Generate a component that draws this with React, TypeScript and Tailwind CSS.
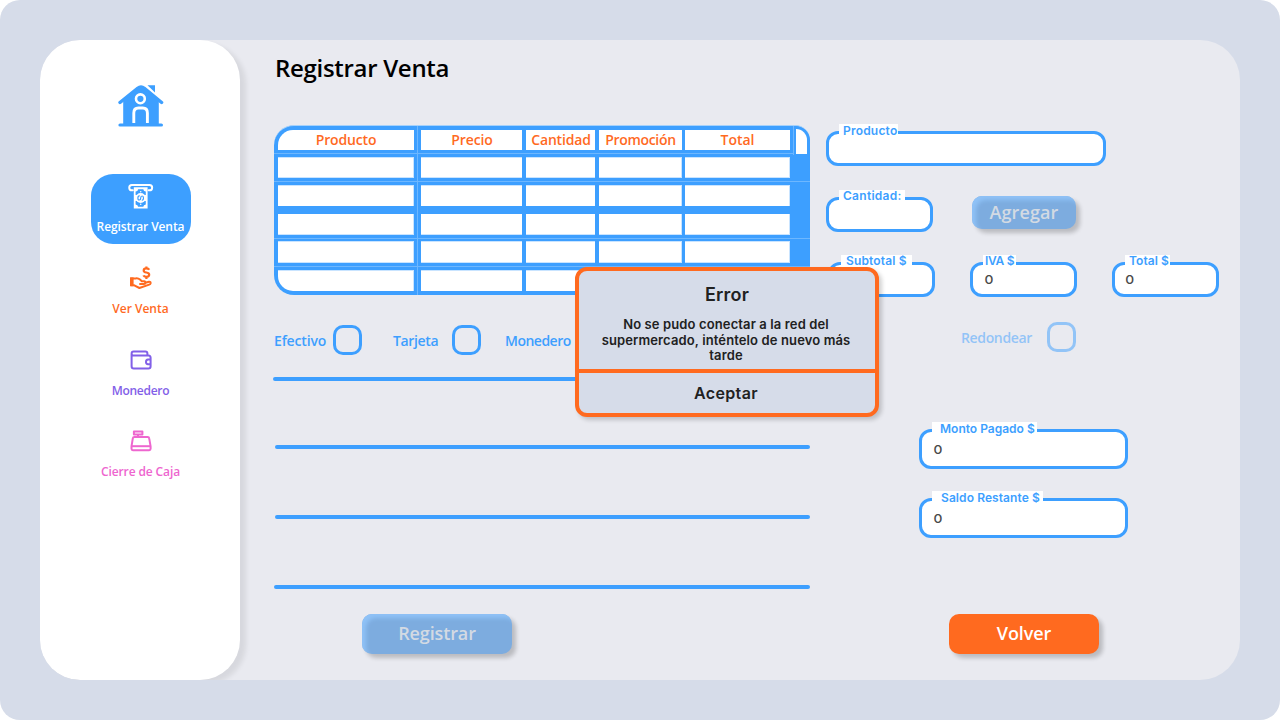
import type { ReactNode } from "react";

function HomeIcon() {
  return (
    <svg width="46" height="43" viewBox="0 0 46 43" fill="none" className="block">
      <path d="M29.5 0.2H37V7.6Z" fill="#3d9fff" />
      <path
        d="M2 17.5 19.6 3.3Q23 0.8 26.4 3.3L43.6 17.5"
        stroke="#3d9fff"
        strokeWidth="3.4"
        strokeLinecap="round"
      />
      <path d="M5.2 15.5 19.6 4Q23 2 26.4 4L40.8 15.5V40H5.2Z" fill="#3d9fff" />
      <path d="M2 40H43.4" stroke="#3d9fff" strokeWidth="3.2" strokeLinecap="round" />
      <circle cx="22.4" cy="13.8" r="4.4" stroke="#fff" strokeWidth="2.6" />
      <path
        d="M15.8 38V28Q15.8 23 20.4 23H24.8Q29.4 23 29.4 28V38"
        stroke="#fff"
        strokeWidth="2.9"
        strokeLinecap="butt"
      />
    </svg>
  );
}

function CashIcon() {
  return (
    <svg width="28" height="28" viewBox="0 0 28 28" fill="none" className="block">
      <path
        d="M5.8 8.3H4.9A2.6 2.6 0 0 1 4.9 3H22.5A2.6 2.6 0 0 1 22.5 8.3H21.6"
        stroke="#fff"
        strokeWidth="2"
        strokeLinecap="round"
      />
      <path d="M6.8 5.2H20.6V26.6H6.8Z" fill="#fff" />
      <path
        d="M11.1 7.3H16.3Q16.5 9.4 18.8 9.6V13H8.6V9.6Q10.9 9.4 11.1 7.3ZM8.6 19H18.8V22.4Q16.5 22.6 16.3 24.7H11.1Q10.9 22.6 8.6 22.4Z"
        fill="#3d9fff"
      />
      <circle cx="13.7" cy="16" r="5" fill="#fff" />
      <path
        d="M12.3 13.8Q10.9 13.8 10.9 16T12.3 18Q13.7 18 13.7 16T15.1 14Q16.5 14 16.5 16T15.3 18.2"
        stroke="#3d9fff"
        strokeWidth="1.2"
        strokeLinecap="round"
      />
      <circle cx="13.7" cy="9.7" r="0.8" fill="#fff" />
      <circle cx="13.7" cy="22.3" r="0.8" fill="#fff" />
    </svg>
  );
}

function HandMoneyIcon() {
  return (
    <svg width="28" height="28" viewBox="0 0 28 28" fill="none" className="block">
      <path
        d="M22.2 5.8Q21.6 4.4 19.3 4.4Q16.7 4.4 16.7 6.4Q16.7 8.1 19.4 8.5Q22.2 8.9 22.2 10.8Q22.2 12.8 19.4 12.8Q17 12.8 16.4 11.4M19.4 2.4V4.4M19.4 12.8V15"
        stroke="#ff6a1f"
        strokeWidth="2.2"
      />
      <path
        d="M4 14.4H8.6Q11.2 14 13 15.6L14.8 17.2H17.4Q18.6 17.4 18.4 18.8L22 17.8Q23.8 17.6 23.6 19.2Q23.4 20.2 22.2 20.6L12.4 24L6.8 21.2H4Z"
        stroke="#ff6a1f"
        strokeWidth="2"
        strokeLinejoin="round"
      />
      <path d="M3 13.4H6.6V22.2H3Z" fill="#ff6a1f" />
      <path d="M13 20H17Q18.4 20 18.4 18.4" stroke="#ff6a1f" strokeWidth="1.9" strokeLinecap="round" />
    </svg>
  );
}

function WalletIcon() {
  return (
    <svg width="28" height="28" viewBox="0 0 28 28" fill="none" stroke="#8260e8" strokeWidth="2" className="block">
      <path d="M4.6 8V20.2Q4.6 22.4 6.8 22.4H21.4Q23.6 22.4 23.6 20.2V11.8Q23.6 9.8 21.4 9.6H6Q4.6 9.4 4.6 7.6Q4.6 5.4 6.6 5.4H18.4Q20.4 5.4 20.4 7.4V9.4" />
      <path d="M23.6 13.6H21Q19 13.8 19 15.9T21 18.2H23.6" />
    </svg>
  );
}

function RegisterIcon() {
  return (
    <svg width="28" height="28" viewBox="0 0 28 28" fill="none" stroke="#ee66cf" strokeWidth="2" strokeLinejoin="round" className="block">
      <path d="M6.9 4.5H15.4V7.5H6.9ZM11 7.8V10" />
      <path d="M7.4 10H20.6Q22 10 22.2 11.4L23.6 19.4V21.8Q23.6 23.2 22.2 23.2H5.9Q4.5 23.2 4.5 21.8V19.4L5.8 11.4Q6 10 7.4 10Z" />
      <path d="M4.6 19.2H23.4" />
    </svg>
  );
}

function NavItem({ icon, label, className }: { icon: ReactNode; label: string; className: string }) {
  return (
    <a className={`flex h-[70px] w-[100px] flex-col items-center rounded-[22px] pt-2 text-[12px] font-semibold whitespace-nowrap ${className}`}>
      {icon}
      <span className="mt-2 leading-[17px]">{label}</span>
    </a>
  );
}

type FieldProps = { label: string; value?: string; box: string; tag: string; pad?: string };

function Field({ label, value, box, tag, pad = "" }: FieldProps) {
  return (
    <div className={`relative flex shrink-0 rounded-[12px] border-[3px] border-[#3d9fff] bg-white ${box}`}>
      <label
        className={`absolute -top-[10px] h-[14px] bg-white text-[12px] font-semibold whitespace-nowrap text-[#3d9fff] ${tag}`}
      >
        {label}
      </label>
      <span className={`origin-left scale-x-[1.15] text-[12px] leading-4 font-medium text-[#4a4a4a] ${pad}`}>{value}</span>
    </div>
  );
}

const disabledButton =
  "bg-[#7dacdf] text-[#d3dae3] shadow-[4px_4px_4px_rgba(0,0,0,0.2),inset_4px_4px_4px_#8fc2f7]";

const columns = "grid grid-cols-[136px_7px_101px_4px_69px_4px_83px_3px_105px] pl-1";

const header = [
  { name: "Producto", style: "rounded-tl-[15px] tracking-[-0.15px]" },
  { name: "Precio", style: "pl-px tracking-[-0.1px]" },
  { name: "Cantidad", style: "pl-px tracking-[-0.18px]" },
  { name: "Promoción", style: "tracking-[-0.33px]" },
  { name: "Total", style: "" },
];

const bodyRows = [
  { height: "h-[21px] border-y", gap: "h-[7px]", line: true },
  { height: "h-[21px] border-t", gap: "h-2", line: false },
  { height: "h-[21px] border-b", gap: "h-[6px]", line: true },
  { height: "h-[22px] border-y", gap: "h-[7px]", line: true },
  { height: "h-[21px] border-t", gap: "h-1", line: false },
];

function Rule({ height, line }: { height: string; line: boolean }) {
  return <div className={`flex items-center ${height}`}>{line && <div className="h-px w-full bg-[#6db7ff]" />}</div>;
}

function ColumnRule() {
  return (
    <div className="flex justify-center">
      <div className="-my-1 w-px bg-[#6db7ff]" />
    </div>
  );
}

function SalesTable() {
  return (
    <div className="relative flex h-[170px] w-[536px] flex-col overflow-hidden rounded-l-[20px] rounded-tr-[15px] border-t border-[#a5d1fb] bg-[#3d9fff] pt-1">
      <div className={`${columns} h-5 text-center text-[14px] leading-[19px] font-semibold text-[#ff6a1f]`}>
        {header.map((h, i) => [
          <div key={h.name} className={`bg-white whitespace-nowrap ${h.style}`}>{h.name}</div>,
          i === 0 ? <ColumnRule key="r0" /> : i < 4 ? <div key={`r${i}`} /> : null,
        ])}
      </div>
      <Rule height="h-[7px]" line />
      {bodyRows.map((row, r) => (
        <div key={r}>
          <div className={columns}>
            {[0, 1, 2, 3, 4].map((c) => [
              <div
                key={c}
                className={`border-[#c9e4ff] bg-white ${row.height} ${c === 0 || c > 2 ? "border-r" : ""} ${
                  r === 4 && c === 0 ? "rounded-bl-[15px]" : ""
                }`}
              />,
              c === 0 ? <ColumnRule key="r0" /> : c < 4 ? <div key={`r${c}`} /> : null,
            ])}
          </div>
          <Rule height={row.gap} line={row.line} />
        </div>
      ))}
      <div className="absolute top-0 right-0 flex h-[29px] w-[17px] rounded-tr-[15px] border-l border-[#6db7ff] bg-[#3d9fff] pt-[3px] pr-[3px] pl-[2px]">
        <div className="h-[25px] w-full rounded-tr-[11px] bg-white" />
      </div>
    </div>
  );
}

function Check() {
  return <div className="h-[30px] w-[29px] rounded-[10px] border-[3px] border-[#3d9fff]" />;
}

export default function App() {
  return (
    <div className="h-[720px] w-[1280px] bg-white font-['Open_Sans',sans-serif]">
      <div className="relative h-full w-full rounded-[20px] bg-[#d6dce9] p-10">
        <main className="flex h-[640px] w-[1200px] overflow-hidden rounded-[40px] bg-[#e9eaf0]">
          <aside className="flex h-full w-[200px] shrink-0 flex-col items-center rounded-[40px] bg-white pt-[45px] pl-px shadow-[6px_4px_5px_rgba(0,0,0,0.08)]">
            <HomeIcon />
            <nav className="mt-[46px] flex flex-col gap-3">
              <NavItem icon={<CashIcon />} label="Registrar Venta" className="bg-[#3d9fff] tracking-[-0.1px] text-white" />
              <NavItem icon={<HandMoneyIcon />} label="Ver Venta" className="text-[#ff6a1f]" />
              <NavItem icon={<WalletIcon />} label="Monedero" className="tracking-[-0.28px] text-[#8260e8]" />
              <NavItem icon={<RegisterIcon />} label="Cierre de Caja" className="-mt-px tracking-[-0.12px] text-[#ee66cf]" />
            </nav>
          </aside>

          <section className="flex w-[586px] shrink-0 flex-col pl-[34px]">
            <h1 className="mt-3 h-8 pl-px text-[24px] leading-8 font-semibold tracking-[-0.3px] text-black">Registrar Venta</h1>
            <div className="mt-[41px]">
              <SalesTable />
            </div>
            <div className="mt-[30px] flex h-[30px] items-center text-[14px] leading-5 font-semibold text-[#3d9fff]">
              <span className="mt-[2px] w-[59px] tracking-[-0.15px]">Efectivo</span>
              <Check />
              <span className="mt-[2px] ml-[31px] w-[59px] tracking-[-0.35px]">Tarjeta</span>
              <Check />
              <span className="mt-[2px] ml-6 tracking-[-0.5px]">Monedero</span>
            </div>
            <div className="mt-[22px] -ml-px h-1 w-[537px] rounded-full bg-[#3d9fff]" />
            <div className="mt-16 ml-px h-1 w-[535px] rounded-full bg-[#3d9fff]" />
            <div className="mt-[66px] ml-px h-1 w-[535px] rounded-full bg-[#3d9fff]" />
            <div className="mt-[66px] h-1 w-[536px] rounded-full bg-[#3d9fff]" />
            <button
              className={`mt-[25px] ml-[88px] h-10 w-[150px] rounded-[10px] pb-[2px] text-[18px] leading-[24px] font-semibold tracking-[-0.12px] ${disabledButton}`}
            >
              Registrar
            </button>
          </section>

          <section className="flex w-[414px] shrink-0 flex-col pt-[91px] font-[Inter,sans-serif]">
            <Field label="Producto" box="h-[35px] w-[280px]" tag="left-[10px] w-[59px] pl-1 leading-[13px] tracking-[0.2px]" />
            <div className="mt-[30px] flex h-9">
              <Field label="Cantidad:" box="mt-px h-[35px] w-[107px]" tag="left-[10px] w-[66px] pl-[4px] leading-[12px] tracking-[0.28px]" />
              <button
                className={`ml-[39px] h-[33px] w-[104px] rounded-[10px] pb-px font-['Open_Sans',sans-serif] text-[18px] leading-[24px] font-semibold tracking-[0.1px] ${disabledButton}`}
              >
                Agregar
              </button>
            </div>
            <div className="mt-[30px] flex">
              <Field label="Subtotal $" value="0" box="ml-[2px] h-[35px] w-[107px]" tag="left-[10px] w-[71px] pl-[5px] leading-[12px] tracking-[0.15px]" pad="pt-[6px] pl-3" />
              <Field label="IVA $" value="0" box="ml-[35px] h-[35px] w-[107px]" tag="left-[10px] w-[33px] pl-[2px] leading-[12px] tracking-[-0.3px]" pad="pt-[7px] pl-[10px]" />
              <Field label="Total $" value="0" box="ml-[35px] h-[35px] w-[107px]" tag="left-[10px] w-[45px] pl-[4px] leading-[12px] tracking-[0.05px]" pad="pt-[7px] pl-[9px]" />
            </div>
            <div className="mt-[25px] ml-[135px] flex h-[30px] items-center font-['Open_Sans',sans-serif] opacity-50">
              <span className="mt-[2px] w-[86px] text-[14px] leading-5 font-semibold tracking-[-0.35px] text-[#3d9fff]">Redondear</span>
              <Check />
            </div>
            <Field label="Monto Pagado $" value="0" box="mt-[77px] ml-[93px] h-10 w-[209px]" tag="left-[10px] w-[105px] pl-[8px] leading-[14px]" pad="pt-[10px] pl-[10px]" />
            <Field label="Saldo Restante $" value="0" box="mt-[29px] ml-[93px] h-10 w-[209px]" tag="left-[10px] w-[111px] pl-[9px] leading-[14px] tracking-[0.08px]" pad="pt-[10px] pl-[10px]" />
            <button className="mt-[76px] ml-[123px] h-10 w-[150px] rounded-[10px] bg-[#ff6a1f] pb-[2px] font-['Open_Sans',sans-serif] text-[18px] leading-[24px] font-semibold tracking-[-0.1px] text-white shadow-[4px_4px_4px_rgba(0,0,0,0.2)]">
              Volver
            </button>
          </section>
        </main>

        <div
          role="dialog"
          className="absolute top-[267px] left-[575px] flex h-[150px] w-[304px] flex-col rounded-[12px] border-4 border-[#ff6a1f] bg-[#d6dce9] text-center font-[Inter,sans-serif] font-semibold text-[#212121] shadow-[3px_3px_4px_rgba(0,0,0,0.18)]"
        >
          <h2 className="mt-3 text-[18px] leading-6 tracking-[0.2px]">Error</h2>
          <p className="mt-[10px] h-[52px] pr-[2px] text-[13px] leading-[15.6px] tracking-[0.12px]">
            No se pudo conectar a la red del
            <br />
            supermercado, inténtelo de nuevo más
            <br />
            tarde
          </p>
          <button className="h-[44px] border-t-4 border-[#ff6a1f] pr-[2px] text-[16px] leading-[20px] tracking-[0.35px]">Aceptar</button>
        </div>
      </div>
    </div>
  );
}
